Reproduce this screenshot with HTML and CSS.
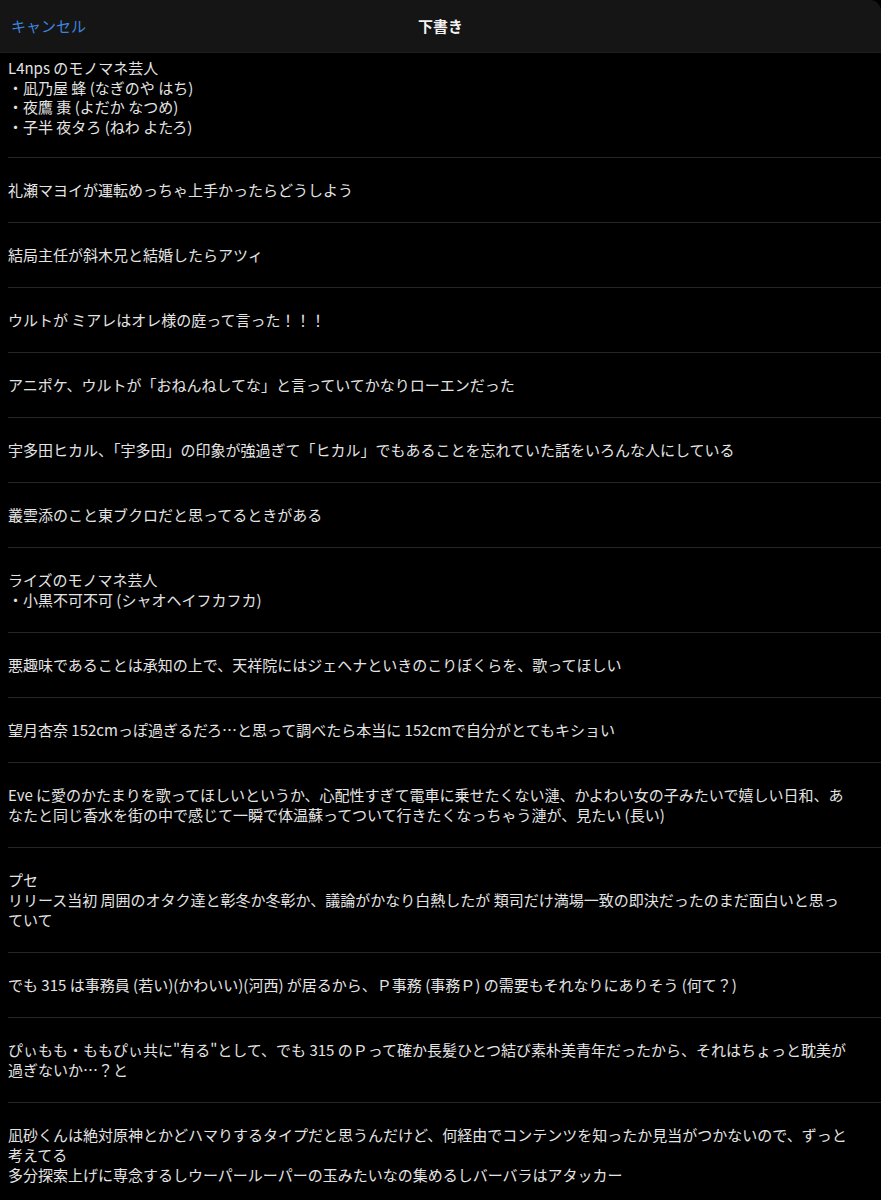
FILE: index.html
```html
<!DOCTYPE html>
<html lang="ja">
<head>
<meta charset="utf-8">
<title>下書き</title>
<link rel="stylesheet" href="styles.css">
</head>
<body>
<div class="screen">
  <header class="nav">
    <span class="nav-cancel">キャンセル</span>
    <span class="nav-title">下書き</span>
  </header>
  <ul class="drafts">
    <li class="draft draft-first">L4nps のモノマネ芸人<br>・凪乃屋 蜂 (なぎのや はち)<br>・夜鷹 棗 (よだか なつめ)<br>・子半 夜タろ (ねわ よたろ)</li>
    <li class="draft">礼瀬マヨイが運転めっちゃ上手かったらどうしよう</li>
    <li class="draft">結局主任が斜木兄と結婚したらアツィ</li>
    <li class="draft">ウルトが ミアレはオレ様の庭って言った！！！</li>
    <li class="draft">アニポケ、ウルトが「おねんねしてな」と言っていてかなりローエンだった</li>
    <li class="draft">宇多田ヒカル、「宇多田」の印象が強過ぎて「ヒカル」でもあることを忘れていた話をいろんな人にしている</li>
    <li class="draft">叢雲添のこと東ブクロだと思ってるときがある</li>
    <li class="draft">ライズのモノマネ芸人<br>・小黒不可不可 (シャオヘイフカフカ)</li>
    <li class="draft">悪趣味であることは承知の上で、天祥院にはジェヘナといきのこりぼくらを、歌ってほしい</li>
    <li class="draft">望月杏奈 152cmっぽ過ぎるだろ…と思って調べたら本当に 152cmで自分がとてもキショい</li>
    <li class="draft">Eve に愛のかたまりを歌ってほしいというか、心配性すぎて電車に乗せたくない漣、かよわい女の子みたいで嬉しい日和、あなたと同じ香水を街の中で感じて一瞬で体温蘇ってついて行きたくなっちゃう漣が、見たい (長い)</li>
    <li class="draft">プセ<br>リリース当初 周囲のオタク達と彰冬か冬彰か、議論がかなり白熱したが 類司だけ満場一致の即決だったのまだ面白いと思っていて</li>
    <li class="draft">でも 315 は事務員 (若い)(かわいい)(河西) が居るから、Ｐ事務 (事務Ｐ) の需要もそれなりにありそう (何て？)</li>
    <li class="draft">ぴぃもも・ももぴぃ共に"有る"として、でも 315 のＰって確か長髪ひとつ結び素朴美青年だったから、それはちょっと耽美が過ぎないか…？と</li>
    <li class="draft">凪砂くんは絶対原神とかどハマりするタイプだと思うんだけど、何経由でコンテンツを知ったか見当がつかないので、ずっと考えてる<br>多分探索上げに専念するしウーパールーパーの玉みたいなの集めるしバーバラはアタッカー</li>
  </ul>
</div>
</body>
</html>
```

FILE: styles.css
```css
html, body {
  margin: 0;
  padding: 0;
  background: #000;
}

body {
  font-family: "Noto Sans CJK JP", "Noto Sans", sans-serif;
  color: #e4e4e4;
  overflow: hidden;
}

.screen {
  width: 881px;
  height: 1200px;
  overflow: hidden;
  background: #000;
}

.nav {
  position: relative;
  height: 52px;
  background: #151515;
  border-bottom: 1px solid #1e1e1e;
  border-top-right-radius: 11px;
  display: flex;
  align-items: center;
  justify-content: center;
}

.nav-cancel {
  position: absolute;
  left: 11px;
  top: 15px;
  font-size: 15px;
  line-height: 22px;
  color: #3e84dc;
}

.nav-title {
  font-size: 15px;
  line-height: 22px;
  font-weight: 700;
  color: #f2f2f2;
}

.drafts {
  list-style: none;
  margin: 0;
  padding: 0 0 0 8px;
}

.draft {
  padding: 22px 33px 22px 0;
  font-size: 15px;
  line-height: 20px;
  border-bottom: 1px solid #262626;
}

.draft-first {
  padding-top: 5px;
  padding-bottom: 21px;
  line-height: 19.5px;
}
```
